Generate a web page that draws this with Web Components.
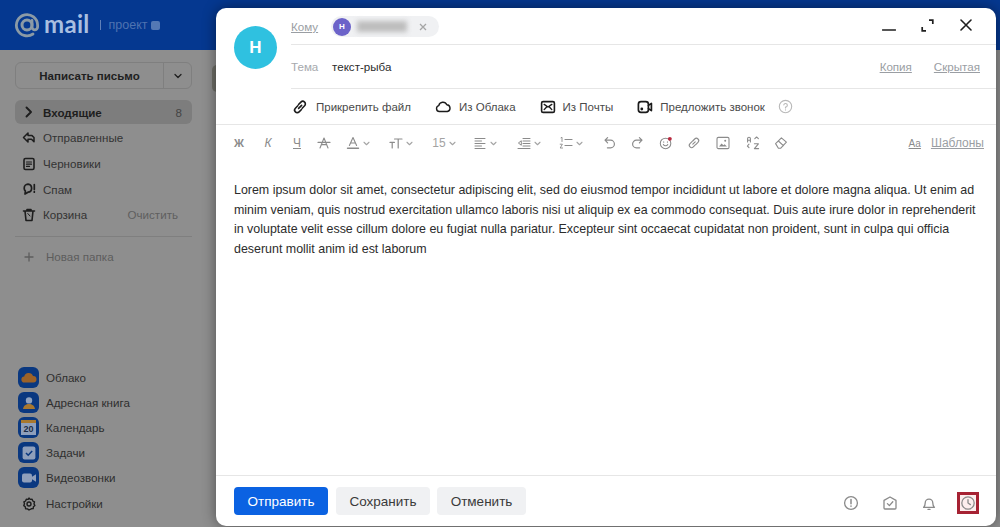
<!DOCTYPE html>
<html lang="ru">
<head>
<meta charset="utf-8">
<title>Mail</title>
<style>
	html, body { margin: 0; height: 100%; overflow: hidden; }
	body { font-family: "Liberation Sans", Arial, sans-serif; background: #8e8e8e; }
</style>
</head>
<body>
<mail-app>
	<mail-header slot="header"></mail-header>
	<mail-sidebar slot="sidebar"></mail-sidebar>
	<compose-window slot="modal"></compose-window>
</mail-app>

<script>
(function() {
	const stroke = 'fill="none" stroke="currentColor" stroke-linecap="round" stroke-linejoin="round"';
	const icons = {
		chevron: `<svg viewBox="0 0 8 6" width="8" height="6"><path d="M1 1.5 4 4.5 7 1.5" ${stroke} stroke-width="1.3"/></svg>`,
		inbox: `<svg viewBox="0 0 12 12" width="12" height="12"><path d="M3.5 1.5 8 6 3.5 10.5" ${stroke} stroke-width="1.9"/></svg>`,
		sent: `<svg viewBox="0 0 14 14" width="14" height="14"><path d="M6 2 1.5 6.5 6 11V8.2h3.5l2.5 2.6V6.5L10 4.6H6z" ${stroke} stroke-width="1.5"/></svg>`,
		draft: `<svg viewBox="0 0 14 14" width="14" height="14"><rect x="2" y="1.5" width="10" height="11" rx="1.5" ${stroke} stroke-width="1.6"/><path d="M4.5 5h5M4.5 7.2h5M4.5 9.4h3" ${stroke} stroke-width="1.2"/></svg>`,
		spam: `<svg viewBox="0 0 14 14" width="14" height="14"><path d="M6 2.2a4 4 0 0 0-3.8 4c0 1.2.5 2.2 1.2 2.9L3 12l3-1.8a4 4 0 0 0 3.6-4 4 4 0 0 0-3.6-4z" ${stroke} stroke-width="1.7"/><path d="M12.3 2.5v5M12.3 9.6v.6" ${stroke} stroke-width="1.7"/></svg>`,
		trash: `<svg viewBox="0 0 14 14" width="14" height="14"><path d="M1.5 3h11M5 3V1.5h4V3M3 3l1 9.5h6L11 3" ${stroke} stroke-width="1.6"/><path d="M5.8 5.5 8 8" ${stroke} stroke-width="1"/></svg>`,
		plus: `<svg viewBox="0 0 10 10" width="10" height="10"><path d="M5 1v8M1 5h8" ${stroke} stroke-width="1.3"/></svg>`,
		gear: `<svg viewBox="0 0 14 14" width="14" height="14"><path d="M7 1l1.2 1.4 1.9-.2.7 1.8 1.7.9-.5 1.9.9 1.7-1.5 1.2-.2 1.9-1.9.2L7 13l-1.5-1.1-1.9-.2-.3-1.9L1.8 8.6l.7-1.8-.6-1.9 1.7-.9.7-1.8 1.9.2z" ${stroke} stroke-width="1.4"/><circle cx="7" cy="7" r="2" ${stroke} stroke-width="1.4"/></svg>`,
		clip: `<svg viewBox="0 0 16 16" width="16" height="16"><path d="M6.6 9.4 9.6 6.4M5.8 6.8 3.4 9.2a2.6 2.6 0 0 0 3.7 3.7l2.4-2.4M6.5 5.5l2.4-2.4a2.6 2.6 0 0 1 3.7 3.7l-2.4 2.4" ${stroke} stroke-width="1.6"/></svg>`,
		cloud: `<svg viewBox="0 0 16 16" width="16" height="16"><path d="M4.4 12.5a3 3 0 0 1-.6-5.9 4.2 4.2 0 0 1 8-.8 3.4 3.4 0 0 1 .6 6.7z" ${stroke} stroke-width="1.4"/></svg>`,
		mailbox: `<svg viewBox="0 0 16 16" width="16" height="16"><rect x="1.6" y="2.6" width="12.8" height="10.8" rx="1.5" ${stroke} stroke-width="1.6"/><path d="M4.2 5.4 8 8l3.8-2.6M4.2 10.6 6.6 8M11.8 10.6 9.4 8" ${stroke} stroke-width="1.4"/></svg>`,
		video: `<svg viewBox="0 0 16 16" width="16" height="16"><rect x="1.4" y="2.6" width="10" height="10.8" rx="2.6" ${stroke} stroke-width="1.7"/><path d="M11.4 6.4 14.4 4.4v7.2l-3-2" ${stroke} stroke-width="1.7"/><circle cx="4.8" cy="10" r="1.4" fill="currentColor"/></svg>`,
		help: `<svg viewBox="0 0 16 16" width="15" height="15"><circle cx="8" cy="8" r="6.6" ${stroke} stroke-width="1.2"/><path d="M6.2 6.3A1.9 1.9 0 1 1 8 8.6v.9M8 11.4v.2" ${stroke} stroke-width="1.2"/></svg>`,
		minimize: `<svg viewBox="0 0 14 4" width="14" height="4"><path d="M.5 2h13" ${stroke} stroke-width="1.5"/></svg>`,
		expand: `<svg viewBox="0 0 13 13" width="13" height="13"><path d="M8 1.2h3.8V5M1.2 8v3.8H5" fill="none" stroke="currentColor" stroke-width="1.7"/></svg>`,
		close: `<svg viewBox="0 0 12 12" width="12" height="12"><path d="M1 1l10 10M11 1 1 11" ${stroke} stroke-width="1.6"/></svg>`,
		strike: `<svg viewBox="0 0 14 14" width="14" height="14"><path d="M3 12 7 2l4 10M4.6 8.6h4.8M1 6.4h12" ${stroke} stroke-width="1.1"/></svg>`,
		color: `<svg viewBox="0 0 14 14" width="14" height="14"><path d="M3.4 9.4 7 1.6l3.6 7.8M4.6 7h4.8" ${stroke} stroke-width="1.1"/><path d="M1.5 12.2h11" ${stroke} stroke-width="1.4"/></svg>`,
		size: `<svg viewBox="0 0 14 14" width="14" height="14"><path d="M5.5 3h7.5M9.2 3v9M1 6.4h4.4M3.2 6.4v5.6" ${stroke} stroke-width="1.2"/></svg>`,
		align: `<svg viewBox="0 0 14 14" width="14" height="14"><path d="M2 2.5h10M2 5h6.5M2 7.5h10M2 10h6.5M2 12.5h10" ${stroke} stroke-width="1"/></svg>`,
		indent: `<svg viewBox="0 0 14 14" width="14" height="14"><path d="M6 2.5h7M6 5h7M6 7.5h7M6 10h7M1 12.5h12M4 5 1.4 7 4 9z" ${stroke} stroke-width="1"/></svg>`,
		list: `<svg viewBox="0 0 14 14" width="14" height="14"><path d="M6 3.5h7M6 9.5h7" ${stroke} stroke-width="1.2"/><path d="M2 1.8l1-.5v4.2M1.2 8.2h2.2L1.2 12h2.4" ${stroke} stroke-width=".9"/></svg>`,
		undo: `<svg viewBox="0 0 14 14" width="14" height="14"><path d="M4.6 1.6 2 4.2l2.6 2.6M2.4 4.2h5.2a3.7 3.7 0 0 1 0 7.6H4.4" ${stroke} stroke-width="1.2"/></svg>`,
		redo: `<svg viewBox="0 0 14 14" width="14" height="14"><path d="M9.4 1.6 12 4.2 9.4 6.8M11.6 4.2H6.4a3.7 3.7 0 0 0 0 7.6h3.2" ${stroke} stroke-width="1.2"/></svg>`,
		emoji: `<svg viewBox="0 0 16 16" width="16" height="16"><circle cx="7.5" cy="8.5" r="6" ${stroke} stroke-width="1.2"/><path d="M5 9.6a2.8 2.8 0 0 0 5 0M5.4 6.6v.4M9.6 6.6v.4" ${stroke} stroke-width="1.2"/><circle cx="12.4" cy="3.2" r="2.2" fill="#b8293f"/></svg>`,
		link: `<svg viewBox="0 0 14 14" width="14" height="14"><path d="M5.8 8.2 8.2 5.8M5 5.6 3 7.6a2.3 2.3 0 0 0 3.3 3.3l2-2M5.7 5l2-2a2.3 2.3 0 0 1 3.3 3.3l-2 2" ${stroke} stroke-width="1.1"/></svg>`,
		image: `<svg viewBox="0 0 14 14" width="14" height="14"><rect x="1" y="1.4" width="12" height="11.2" rx="1.4" ${stroke} stroke-width="1.1"/><path d="M3 10.4l2.6-3 1.8 1.8 1.2-1 2.4 2.2z" fill="currentColor"/><circle cx="9.2" cy="4.8" r="1" fill="currentColor"/></svg>`,
		swap: `<svg viewBox="0 0 14 14" width="14" height="14"><path d="M1.6 6V2.6a1.3 1.3 0 0 1 2.8 0V6M1.6 4.2h2.8M8.8 2.6 10.6 1l1.8 1.6M3 8.2 1.4 10 3 11.6M8.4 7.8h4L8.4 12.6h4.2" ${stroke} stroke-width="1.1"/></svg>`,
		eraser: `<svg viewBox="0 0 14 14" width="14" height="14"><path d="M1.6 7.6 7.4 1.8l5 4.4-5.6 6H4.4zM4.4 5l5 4.6" ${stroke} stroke-width="1.1"/></svg>`,
		important: `<svg viewBox="0 0 16 16" width="16" height="16"><circle cx="8" cy="8" r="6.4" ${stroke} stroke-width="1.3"/><path d="M8 4.6v4.2M8 11v.3" ${stroke} stroke-width="1.5"/></svg>`,
		task: `<svg viewBox="0 0 16 16" width="16" height="16"><path d="M2 5.4 8 2l6 3.4V13a1 1 0 0 1-1 1H3a1 1 0 0 1-1-1z" ${stroke} stroke-width="1.3"/><path d="M5.4 8.6 7.4 10.6 10.8 6.8" ${stroke} stroke-width="1.3"/></svg>`,
		bell: `<svg viewBox="0 0 16 16" width="16" height="16"><path d="M2.6 12.4c1-1 1.6-2 1.6-4.4a3.8 3.8 0 0 1 7.6 0c0 2.4.6 3.4 1.6 4.4zM7 14.4h2" ${stroke} stroke-width="1.3"/></svg>`,
		clock: `<svg viewBox="0 0 16 16" width="16" height="16"><circle cx="8" cy="8" r="6.2" ${stroke} stroke-width="1.3"/><path d="M8 4.6V8l2.4 1.6" ${stroke} stroke-width="1.3"/></svg>`,
		appCloud: `<svg viewBox="0 0 20 20" width="20" height="20"><path d="M5.6 14.6a3 3 0 0 1-.4-6 4.6 4.6 0 0 1 8.8-.6 3.3 3.3 0 0 1 .4 6.6z" fill="#9c6228"/></svg>`,
		appBook: `<svg viewBox="0 0 20 20" width="20" height="20"><circle cx="10" cy="7.4" r="3.2" fill="#8fa2bf"/><path d="M4 16c.6-3.6 3-5 6-5s5.4 1.4 6 5z" fill="#a8782f"/></svg>`,
		appTask: `<svg viewBox="0 0 20 20" width="20" height="20"><rect x="3.6" y="3.6" width="12.8" height="12.8" rx="2" fill="#8f9fbb"/><path d="M7 10l2.2 2.2L13.2 8" fill="none" stroke="#0a3880" stroke-width="1.6"/></svg>`,
		appVideo: `<svg viewBox="0 0 20 20" width="20" height="20"><rect x="3" y="5.4" width="10" height="9.2" rx="2" fill="#8f9fbb"/><path d="M13 8.8 17 6.2v7.6L13 11.2z" fill="#8f9fbb"/></svg>`
	};

	function define(name, css, html) {
		customElements.define(name, class extends HTMLElement {
			constructor() {
				super();
				this.attachShadow({mode: "open"});
				this.shadowRoot.innerHTML = `<style>${css}</style>` + (typeof html === "function" ? html(this) : html);
			}
		});
	}

	define("mail-app", `
		:host { display: grid; grid-template-columns: 216px 1fr; grid-template-rows: 50px 477px; height: 527px; position: relative; overflow: hidden; }
		.head { grid-column: 1 / 3; }
		.behind { position: absolute; left: 212px; top: 65px; width: 10px; height: 27px; border-radius: 5px; background: #6f6f68; }
	`, `
		<div class="head"><slot name="header"></slot></div>
		<slot name="sidebar"></slot>
		<div class="behind"></div>
		<slot name="modal"></slot>
	`);

	define("mail-header", `
		:host { display: flex; align-items: center; height: 50px; background: #053890; padding-left: 14px; box-sizing: border-box; }
		.at { width: 26px; height: 26px; display: block; }
		.name { font: 700 24px/1 Lato, "Noto Sans", sans-serif; color: #a9bfe0; margin: -3px 0 0 4px; letter-spacing: .3px; }
		.sep { width: 1px; height: 10px; background: #5f80b8; margin: 0 8px 0 10px; }
		.prj { font: 12.5px "Liberation Sans", sans-serif; color: #4f73b0; }
		.badge { width: 9px; height: 9px; border-radius: 2px; background: #5478b4; margin-left: 3px; }
	`, `
		<svg class="at" viewBox="0 0 26 26"><circle cx="13" cy="13" r="5" fill="none" stroke="#8b9aa6" stroke-width="3"/><path d="M18 8.5V15a2.8 2.8 0 0 0 5.6 0v-2A10.6 10.6 0 1 0 19 22" fill="none" stroke="#8b9aa6" stroke-width="2.8" stroke-linecap="round"/></svg>
		<span class="name">mail</span>
		<span class="sep"></span>
		<span class="prj">проект</span>
		<span class="badge"></span>
	`);

	define("mail-sidebar", `
		:host { display: flex; flex-direction: column; padding: 12px 24px 0 15px; box-sizing: border-box; height: 477px; color: #2f2f2f; background: #8e8e8e; }
		.write { display: flex; height: 27px; border: 1px solid #7f7f7f; border-radius: 6px; box-sizing: border-box; font-size: 11.5px; font-weight: 700; color: #1f1f1f; margin-bottom: 11px; }
		.write span { flex: 1; display: flex; align-items: center; justify-content: center; }
		.write i { width: 27px; border-left: 1px solid #7f7f7f; display: flex; align-items: center; justify-content: center; color: #1f1f1f; }
		.sep { height: 1px; background: #7f7f7f; margin: 8px 0 7px; }
		.spacer { flex: 1; }
		.apps { padding: 0 0 10px 3px; }
	`, `
		<div class="write"><span>Написать письмо</span><i>${icons.chevron}</i></div>
		<side-item active icon="inbox" label="Входящие" extra="8"></side-item>
		<side-item icon="sent" label="Отправленные"></side-item>
		<side-item icon="draft" label="Черновики"></side-item>
		<side-item icon="spam" label="Спам"></side-item>
		<side-item icon="trash" label="Корзина" extra="Очистить"></side-item>
		<div class="sep"></div>
		<side-item muted icon="plus" label="Новая папка"></side-item>
		<div class="spacer"></div>
		<div class="apps">
			<app-link color="#0a3880" icon="appCloud" label="Облако"></app-link>
			<app-link color="#0a3880" icon="appBook" label="Адресная книга"></app-link>
			<app-link color="#0a3880" icon="calendar" label="Календарь"></app-link>
			<app-link color="#0a3880" icon="appTask" label="Задачи"></app-link>
			<app-link color="#0a3880" icon="appVideo" label="Видеозвонки"></app-link>
			<app-link plain icon="gear" label="Настройки"></app-link>
		</div>
	`);

	define("side-item", `
		:host { display: flex; align-items: center; height: 25.7px; font-size: 11.6px; padding: 0 10px 0 7px; border-radius: 6px; color: #333; }
		:host([active]) { background: #7d7d7d; font-weight: 700; color: #1e1e1e; height: 24px; margin-bottom: 1px; }
		:host([muted]) { color: #5d5d5d; }
		.ic { width: 14px; height: 14px; margin-right: 7px; display: flex; align-items: center; justify-content: center; color: #1d1d1d; }
		:host([muted]) .ic { color: #5d5d5d; margin-right: 10px; }
		.label { flex: 1; white-space: nowrap; }
		.extra { color: #5f5f5f; font-weight: 400; margin-right: 4px; margin-left: auto; }
		:host([active]) .extra { color: #444; margin-right: 0; }
	`, el => `
		<span class="ic">${icons[el.getAttribute("icon")]}</span>
		<span class="label">${el.getAttribute("label")}</span>
		${el.hasAttribute("extra") ? `<span class="extra">${el.getAttribute("extra")}</span>` : ""}
	`);

	define("app-link", `
		:host { display: flex; align-items: center; height: 25px; font-size: 11.6px; color: #2f2f2f; white-space: nowrap; }
		:host([plain]) { height: 27px; }
		.ic { width: 21px; height: 21px; border-radius: 6px; margin-right: 7px; display: flex; align-items: center; justify-content: center; flex: none; }
		:host([plain]) .ic { color: #1d1d1d; }
		.cal { width: 15px; height: 15px; background: #8f9fbb; border-top: 3px solid #a8782f; box-sizing: border-box; font: 700 9px/12px "Liberation Sans", sans-serif; color: #1d2c45; text-align: center; }
	`, el => {
		const icon = el.getAttribute("icon");
		const inner = icon === "calendar" ? `<span class="cal">20</span>` : icons[icon];
		const bg = el.getAttribute("color");
		return `<span class="ic" ${bg ? `style="background:${bg}"` : ""}>${inner}</span><span>${el.getAttribute("label")}</span>`;
	});

	define("compose-window", `
		:host { position: absolute; left: 216px; top: 8px; width: 780px; height: 518px; background: #fff; border-radius: 10px; box-shadow: 0 0 14px rgba(0,0,0,.45); display: flex; flex-direction: column; color: #2c2c2c; }
		.top { display: grid; grid-template-columns: 75px 1fr; }
		.avatar { width: 43px; height: 43px; margin: 18px 0 0 18px; border-radius: 50%; background: #2fc1e0; color: #fff; font: 700 17px/43px "Liberation Sans", sans-serif; text-align: center; }
		.row { display: flex; align-items: center; border-bottom: 1px solid #e6e6e6; box-sizing: border-box; font-size: 11.6px; }
		.to { height: 37px; padding-top: 1px; }
		.subject { height: 44px; }
		.link { color: #9a9ea3; text-decoration: underline; }
		.gray { color: #a6a9ad; width: 41px; }
		.win { margin-left: auto; display: flex; align-items: center; color: #1f1f1f; padding-right: 17px; }
		.min { margin: 6px 25px 0 0; display: flex; }
		.exp { margin: -3px 26px 0 0; display: flex; }
		.cls { margin: -4px 7px 0 0; display: flex; }
		.cc { margin-left: auto; display: flex; gap: 22px; padding-right: 16px; }
		.attach { height: 36px; padding-left: 76px; display: flex; align-items: center; border-bottom: 1px solid #e6e6e6; box-sizing: border-box; font-size: 11.5px; color: #4a4a4a; }
		.foot { margin-top: auto; height: 51px; border-top: 1px solid #e6e6e6; display: flex; align-items: center; padding: 0 17px 0 18px; box-sizing: border-box; gap: 8px; }
		.spring { flex: 1; }
		.lorem { flex: none; padding: 20px 12px 0 18px; font-size: 12.43px; line-height: 19.5px; color: #2c2c2c; }
	`, `
		<div class="top">
			<div class="avatar">H</div>
			<div>
				<div class="row to">
					<span class="link" style="width:40px">Кому</span>
					<recipient-chip letter="H"></recipient-chip>
					<div class="win">
						<span class="min">${icons.minimize}</span>
						<span class="exp">${icons.expand}</span>
						<span class="cls">${icons.close}</span>
					</div>
				</div>
				<div class="row subject">
					<span class="gray">Тема</span>
					<span>текст-рыба</span>
					<div class="cc"><span class="link">Копия</span><span class="link">Скрытая</span></div>
				</div>
			</div>
		</div>
		<div class="attach">
			<attach-action icon="clip" gap="8" after="24">Прикрепить файл</attach-action>
			<attach-action icon="cloud" gap="8" after="24">Из Облака</attach-action>
			<attach-action icon="mailbox" gap="7" after="24">Из Почты</attach-action>
			<attach-action icon="video" gap="7" after="13">Предложить звонок</attach-action>
			<span style="color:#b9b9b9;display:flex">${icons.help}</span>
		</div>
		<format-bar></format-bar>
		<div class="lorem">Lorem ipsum dolor sit amet, consectetur adipiscing elit, sed do eiusmod tempor incididunt ut labore et dolore magna aliqua. Ut enim ad minim veniam, quis nostrud exercitation ullamco laboris nisi ut aliquip ex ea commodo consequat. Duis aute irure dolor in reprehenderit in voluptate velit esse cillum dolore eu fugiat nulla pariatur. Excepteur sint occaecat cupidatat non proident, sunt in culpa qui officia deserunt mollit anim id est laborum</div>
		<div class="foot">
			<action-button primary>Отправить</action-button>
			<action-button>Сохранить</action-button>
			<action-button style="width:89px;margin-left:-1px">Отменить</action-button>
			<span class="spring"></span>
			<status-icons></status-icons>
		</div>
	`);

	define("recipient-chip", `
		:host { display: flex; align-items: center; width: 108px; height: 21px; border-radius: 11px; background: #f0f1f3; box-sizing: border-box; padding-left: 2px; }
		.dot { width: 18px; height: 18px; border-radius: 50%; background: #6c63c9; color: #fff; font: 700 8px/18px "Liberation Sans", sans-serif; text-align: center; }
		.blur { width: 50px; height: 11px; margin-left: 6px; background: #bdbdbd; filter: blur(2.5px); }
		.x { margin-left: 12px; display: flex; color: #a5a5a5; }
	`, el => `
		<span class="dot">${el.getAttribute("letter")}</span>
		<span class="blur"></span>
		<span class="x"><svg viewBox="0 0 8 8" width="8" height="8"><path d="M1 1l6 6M7 1 1 7" fill="none" stroke="currentColor" stroke-width="1.3"/></svg></span>
	`);

	define("attach-action", `
		:host { display: flex; align-items: center; white-space: nowrap; }
		.ic { display: flex; color: #1b1b1b; }
	`, el => `
		<span class="ic" style="margin-right:${el.getAttribute("gap")}px">${icons[el.getAttribute("icon")]}</span>
		<span style="margin-right:${el.getAttribute("after")}px"><slot></slot></span>
	`);

	define("format-bar", `
		:host { display: flex; align-items: center; height: 36px; padding: 0 12px 0 9px; color: #8b8b8b; font-size: 12px; }
		.right { margin-left: auto; display: flex; align-items: center; gap: 10px; }
		.tpl { color: #9a9ea3; text-decoration: underline; }
		.aa { color: #8b8b8b; text-decoration: underline; font-size: 10px; }
	`, `
		<format-tool text="Ж" bold width="29"></format-tool>
		<format-tool text="К" italic width="29"></format-tool>
		<format-tool text="Ч" under width="27"></format-tool>
		<format-tool icon="strike" width="29"></format-tool>
		<format-tool icon="color" menu width="43"></format-tool>
		<format-tool icon="size" menu width="43"></format-tool>
		<format-tool text="15" menu width="41"></format-tool>
		<format-tool icon="align" menu width="44"></format-tool>
		<format-tool icon="indent" menu width="42"></format-tool>
		<format-tool icon="list" menu width="44"></format-tool>
		<format-tool icon="undo" width="27"></format-tool>
		<format-tool icon="redo" width="29"></format-tool>
		<format-tool icon="emoji" width="28"></format-tool>
		<format-tool icon="link" width="29"></format-tool>
		<format-tool icon="image" width="30"></format-tool>
		<format-tool icon="swap" width="28"></format-tool>
		<format-tool icon="eraser" width="27"></format-tool>
		<div class="right"><span class="aa">Аа</span><span class="tpl">Шаблоны</span></div>
	`);

	define("format-tool", `
		:host { display: flex; align-items: center; flex: none; }
		.g { width: 14px; text-align: center; display: flex; justify-content: center; font-size: 12px; }
		.c { display: flex; margin-left: 3px; color: #a5a5a5; }
		.c svg { width: 7px; height: 5px; }
		.b { font-weight: 700; font-size: 11px; }
		.i { font-style: italic; }
		.u { text-decoration: underline; }
		.t { color: #a3a3a3; }
	`, el => {
		const w = el.getAttribute("width");
		const cls = el.hasAttribute("bold") ? "b" : el.hasAttribute("italic") ? "i" : el.hasAttribute("under") ? "u" : "t";
		const glyph = el.hasAttribute("icon") ? icons[el.getAttribute("icon")] : el.getAttribute("text");
		return `<span style="display:flex;width:${w}px;padding-left:7px;box-sizing:border-box;align-items:center"><span class="g ${el.hasAttribute("icon") ? "" : cls}">${glyph}</span>${el.hasAttribute("menu") ? `<span class="c">${icons.chevron}</span>` : ""}</span>`;
	});

	define("action-button", `
		:host { display: flex; align-items: center; justify-content: center; width: 94px; height: 28px; border-radius: 4px; background: #f0f1f3; color: #3a3a3a; font-size: 13.5px; flex: none; }
		:host([primary]) { background: #0b62e2; color: #fff; }
	`, `<slot></slot>`);

	define("status-icons", `
		:host { display: flex; align-items: center; color: #8a8a8a; margin-top: 4px; }
		span { display: flex; width: 22px; height: 22px; align-items: center; justify-content: center; margin-left: 17px; box-sizing: border-box; }
		.on { outline: 3px solid #a62233; outline-offset: -3px; background: #fdeeee; }
	`, `
		<span>${icons.important}</span>
		<span>${icons.task}</span>
		<span>${icons.bell}</span>
		<span class="on">${icons.clock}</span>
	`);
})();
</script>
</body>
</html>
